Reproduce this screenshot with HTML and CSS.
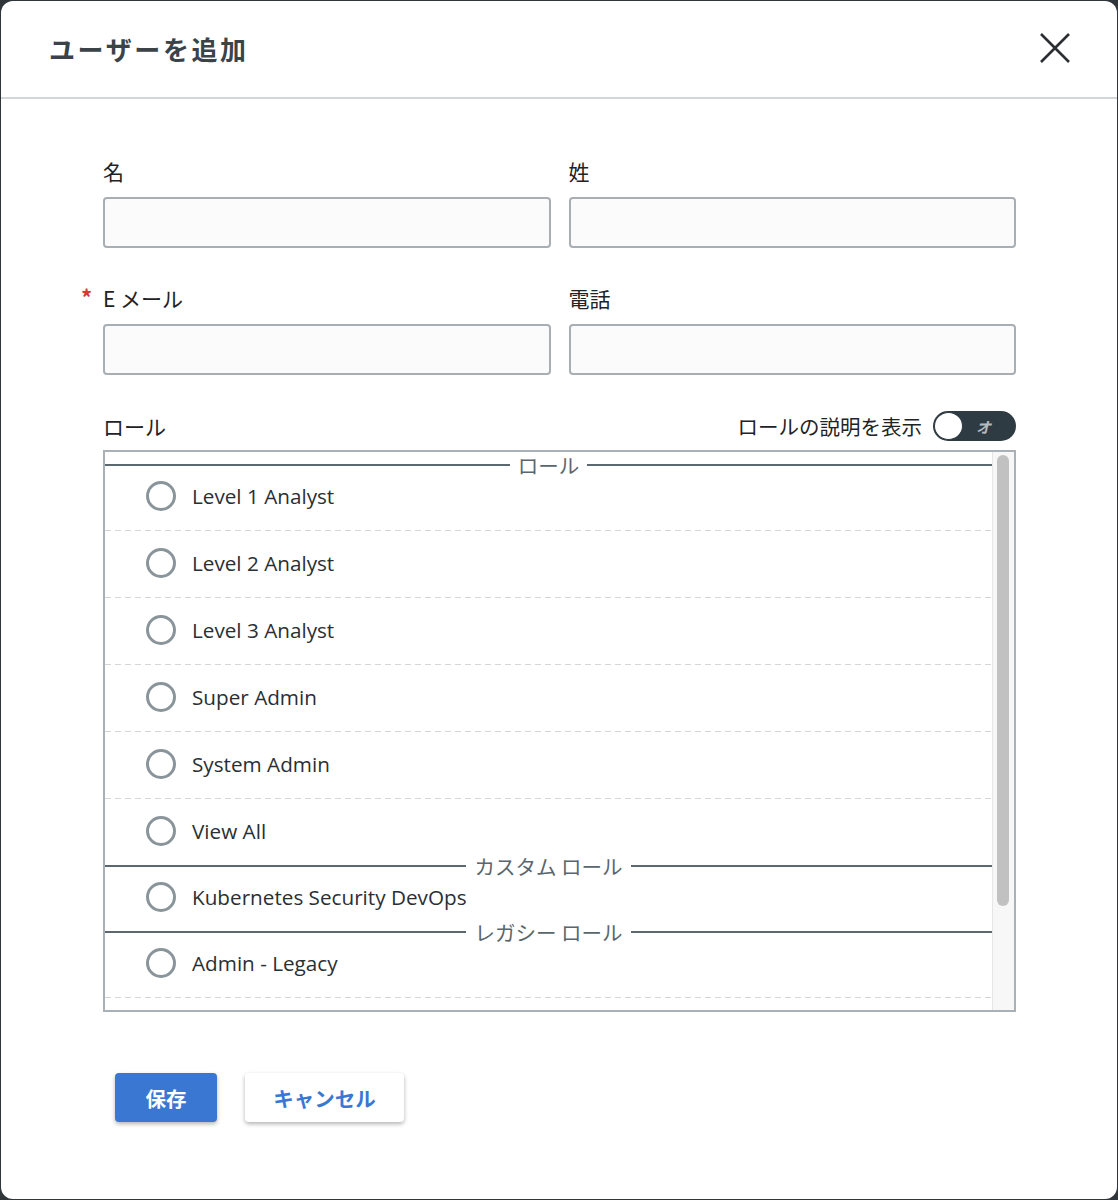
FILE: index.html
```html
<!DOCTYPE html>
<html lang="ja">
<head>
<meta charset="utf-8">
<title>ユーザーを追加</title>
<link rel="stylesheet" href="styles.css">
</head>
<body>
<div class="modal">
  <header class="modal-header">
    <h1 class="modal-title">ユーザーを追加</h1>
    <button class="close-btn" aria-label="閉じる">
      <svg width="32" height="32" viewBox="0 0 32 32"><path d="M2 2 L30 30 M30 2 L2 30" stroke="#2b2f33" stroke-width="2.6" fill="none"/></svg>
    </button>
  </header>
  <div class="modal-body">
    <div class="field-grid">
      <div class="field">
        <label class="field-label">名</label>
        <input class="text-input" type="text">
      </div>
      <div class="field">
        <label class="field-label">姓</label>
        <input class="text-input" type="text">
      </div>
      <div class="field">
        <label class="field-label required">E メール</label>
        <input class="text-input" type="text">
      </div>
      <div class="field">
        <label class="field-label">電話</label>
        <input class="text-input" type="text">
      </div>
    </div>

    <div class="role-head">
      <span class="field-label">ロール</span>
      <div class="toggle-wrap">
        <span class="toggle-text">ロールの説明を表示</span>
        <span class="toggle"><span class="knob"></span><span class="toggle-state">オ</span></span>
      </div>
    </div>

    <div class="role-list">
      <div class="list-content">
        <div class="group">
          <div class="group-head"><span class="group-title">ロール</span></div>
          <div class="role-item"><span class="radio"></span><span class="role-name">Level 1 Analyst</span></div>
          <div class="role-item"><span class="radio"></span><span class="role-name">Level 2 Analyst</span></div>
          <div class="role-item"><span class="radio"></span><span class="role-name">Level 3 Analyst</span></div>
          <div class="role-item"><span class="radio"></span><span class="role-name">Super Admin</span></div>
          <div class="role-item"><span class="radio"></span><span class="role-name">System Admin</span></div>
          <div class="role-item last"><span class="radio"></span><span class="role-name">View All</span></div>
        </div>
        <div class="group">
          <div class="group-head"><span class="group-title">カスタム ロール</span></div>
          <div class="role-item last"><span class="radio"></span><span class="role-name">Kubernetes Security DevOps</span></div>
        </div>
        <div class="group">
          <div class="group-head"><span class="group-title">レガシー ロール</span></div>
          <div class="role-item"><span class="radio"></span><span class="role-name">Admin - Legacy</span></div>
        </div>
      </div>
      <div class="scrollbar"><div class="thumb"></div></div>
    </div>

    <div class="actions">
      <button class="btn btn-primary">保存</button>
      <button class="btn btn-secondary">キャンセル</button>
    </div>
  </div>
</div>
</body>
</html>
```

FILE: styles.css
```css
* { box-sizing: border-box; }

html, body {
  margin: 0;
  padding: 0;
  background: #30353a;
}

body {
  font-family: "Open Sans", "Noto Sans CJK JP", sans-serif;
  color: #1f2326;
}

.modal {
  margin: 1px 1px 0 1px;
  height: 1198px;
  background: #ffffff;
  border-radius: 12px;
  overflow: hidden;
}

.modal-header {
  height: 98px;
  border-bottom: 2px solid #d3d7da;
  display: flex;
  align-items: center;
  justify-content: space-between;
  padding: 0 46px 0 48px;
}

.modal-title {
  margin: 0;
  font-family: "Noto Sans CJK JP", sans-serif;
  font-size: 26px;
  font-weight: 600;
  letter-spacing: 2.6px;
  color: #3b4349;
  position: relative;
  top: -1px;
}

.close-btn {
  border: none;
  background: none;
  padding: 0;
  width: 32px;
  height: 32px;
  cursor: pointer;
  position: relative;
  top: -1px;
}

.close-btn svg { display: block; }

.modal-body {
  padding: 59px 101px 0 102px;
}

.field-grid {
  display: grid;
  grid-template-columns: 1fr 1fr;
  column-gap: 18px;
  row-gap: 37px;
}

.field {
  display: flex;
  flex-direction: column;
}

.field-label {
  font-family: "Noto Sans CJK JP", sans-serif;
  font-size: 21px;
  font-weight: 400;
  line-height: 26px;
  color: #1f2326;
  margin-bottom: 13px;
  position: relative;
}

.required::before {
  content: "*";
  color: #d43a2f;
  position: absolute;
  left: -22px;
  top: -2px;
  font-size: 22px;
  font-weight: 700;
}

.text-input {
  height: 51px;
  flex: none;
  border: 2px solid #a8afb4;
  border-radius: 4px;
  background: #fbfbfb;
  font-size: 18px;
  padding: 0 12px;
  outline: none;
}

.role-head {
  margin-top: 36px;
  height: 30px;
  display: flex;
  align-items: center;
  justify-content: space-between;
}

.role-head .field-label {
  margin-bottom: 0;
}

.toggle-wrap {
  display: flex;
  align-items: center;
  gap: 11px;
}

.toggle-text {
  font-family: "Noto Sans CJK JP", sans-serif;
  font-size: 20.5px;
  color: #1f2326;
}

.toggle {
  width: 83px;
  height: 30px;
  border-radius: 15px;
  background: #2f3b42;
  display: flex;
  align-items: center;
  padding: 0 1px;
}

.knob {
  width: 29px;
  height: 28px;
  border-radius: 50%;
  background: #ffffff;
  border: 1px solid #2f3b42;
}

.toggle-state {
  margin-left: 13px;
  font-family: "Noto Sans CJK JP", sans-serif;
  font-size: 15px;
  font-weight: 700;
  font-style: italic;
  color: #b5bcc1;
}

.role-list {
  margin-top: 9px;
  height: 562px;
  border: 2px solid #aab1b6;
  display: flex;
}

.list-content {
  flex: 1;
  min-width: 0;
  padding-top: 1px;
}

.scrollbar {
  width: 22px;
  flex: none;
  background: #f7f7f7;
  border-left: 1px solid #e6e6e6;
  padding: 3px 5px 0 4px;
}

.thumb {
  height: 451px;
  border-radius: 6px;
  background: #c1c1c1;
}

.group + .group .group-head {
  margin-top: -11px;
}

.group-head {
  height: 24px;
  margin-bottom: -13px;
  display: flex;
  align-items: center;
  gap: 8px;
}

.group-head::before,
.group-head::after {
  content: "";
  flex: 1;
  height: 2px;
  background: #5c6870;
}

.group-title {
  font-family: "Noto Sans CJK JP", sans-serif;
  font-size: 20.5px;
  line-height: 24px;
  color: #5a666e;
  white-space: nowrap;
}

.role-item {
  height: 67px;
  display: flex;
  align-items: center;
  padding-left: 41px;
  padding-bottom: 3px;
  background: repeating-linear-gradient(to right, #d6d6d6 0 6px, transparent 6px 10px) left bottom / 100% 1px no-repeat;
}

.role-item.last {
  height: 66px;
  background: none;
}

.radio {
  width: 30px;
  height: 30px;
  border-radius: 50%;
  border: 3px solid #8a949b;
  flex: none;
}

.role-name {
  margin-left: 16px;
  font-size: 20.7px;
  color: #2a2f33;
}

.actions {
  margin-top: 61px;
  padding-left: 12px;
  display: flex;
  gap: 28px;
}

.btn {
  height: 49px;
  border: none;
  border-radius: 4px;
  font-family: "Noto Sans CJK JP", sans-serif;
  font-size: 20.5px;
  font-weight: 700;
  cursor: pointer;
  box-shadow: 0 2px 4px rgba(0, 0, 0, 0.3);
}

.btn-primary {
  width: 102px;
  background: #3a77d3;
  color: #ffffff;
}

.btn-secondary {
  width: 159px;
  background: #ffffff;
  color: #3a77d3;
}
```
